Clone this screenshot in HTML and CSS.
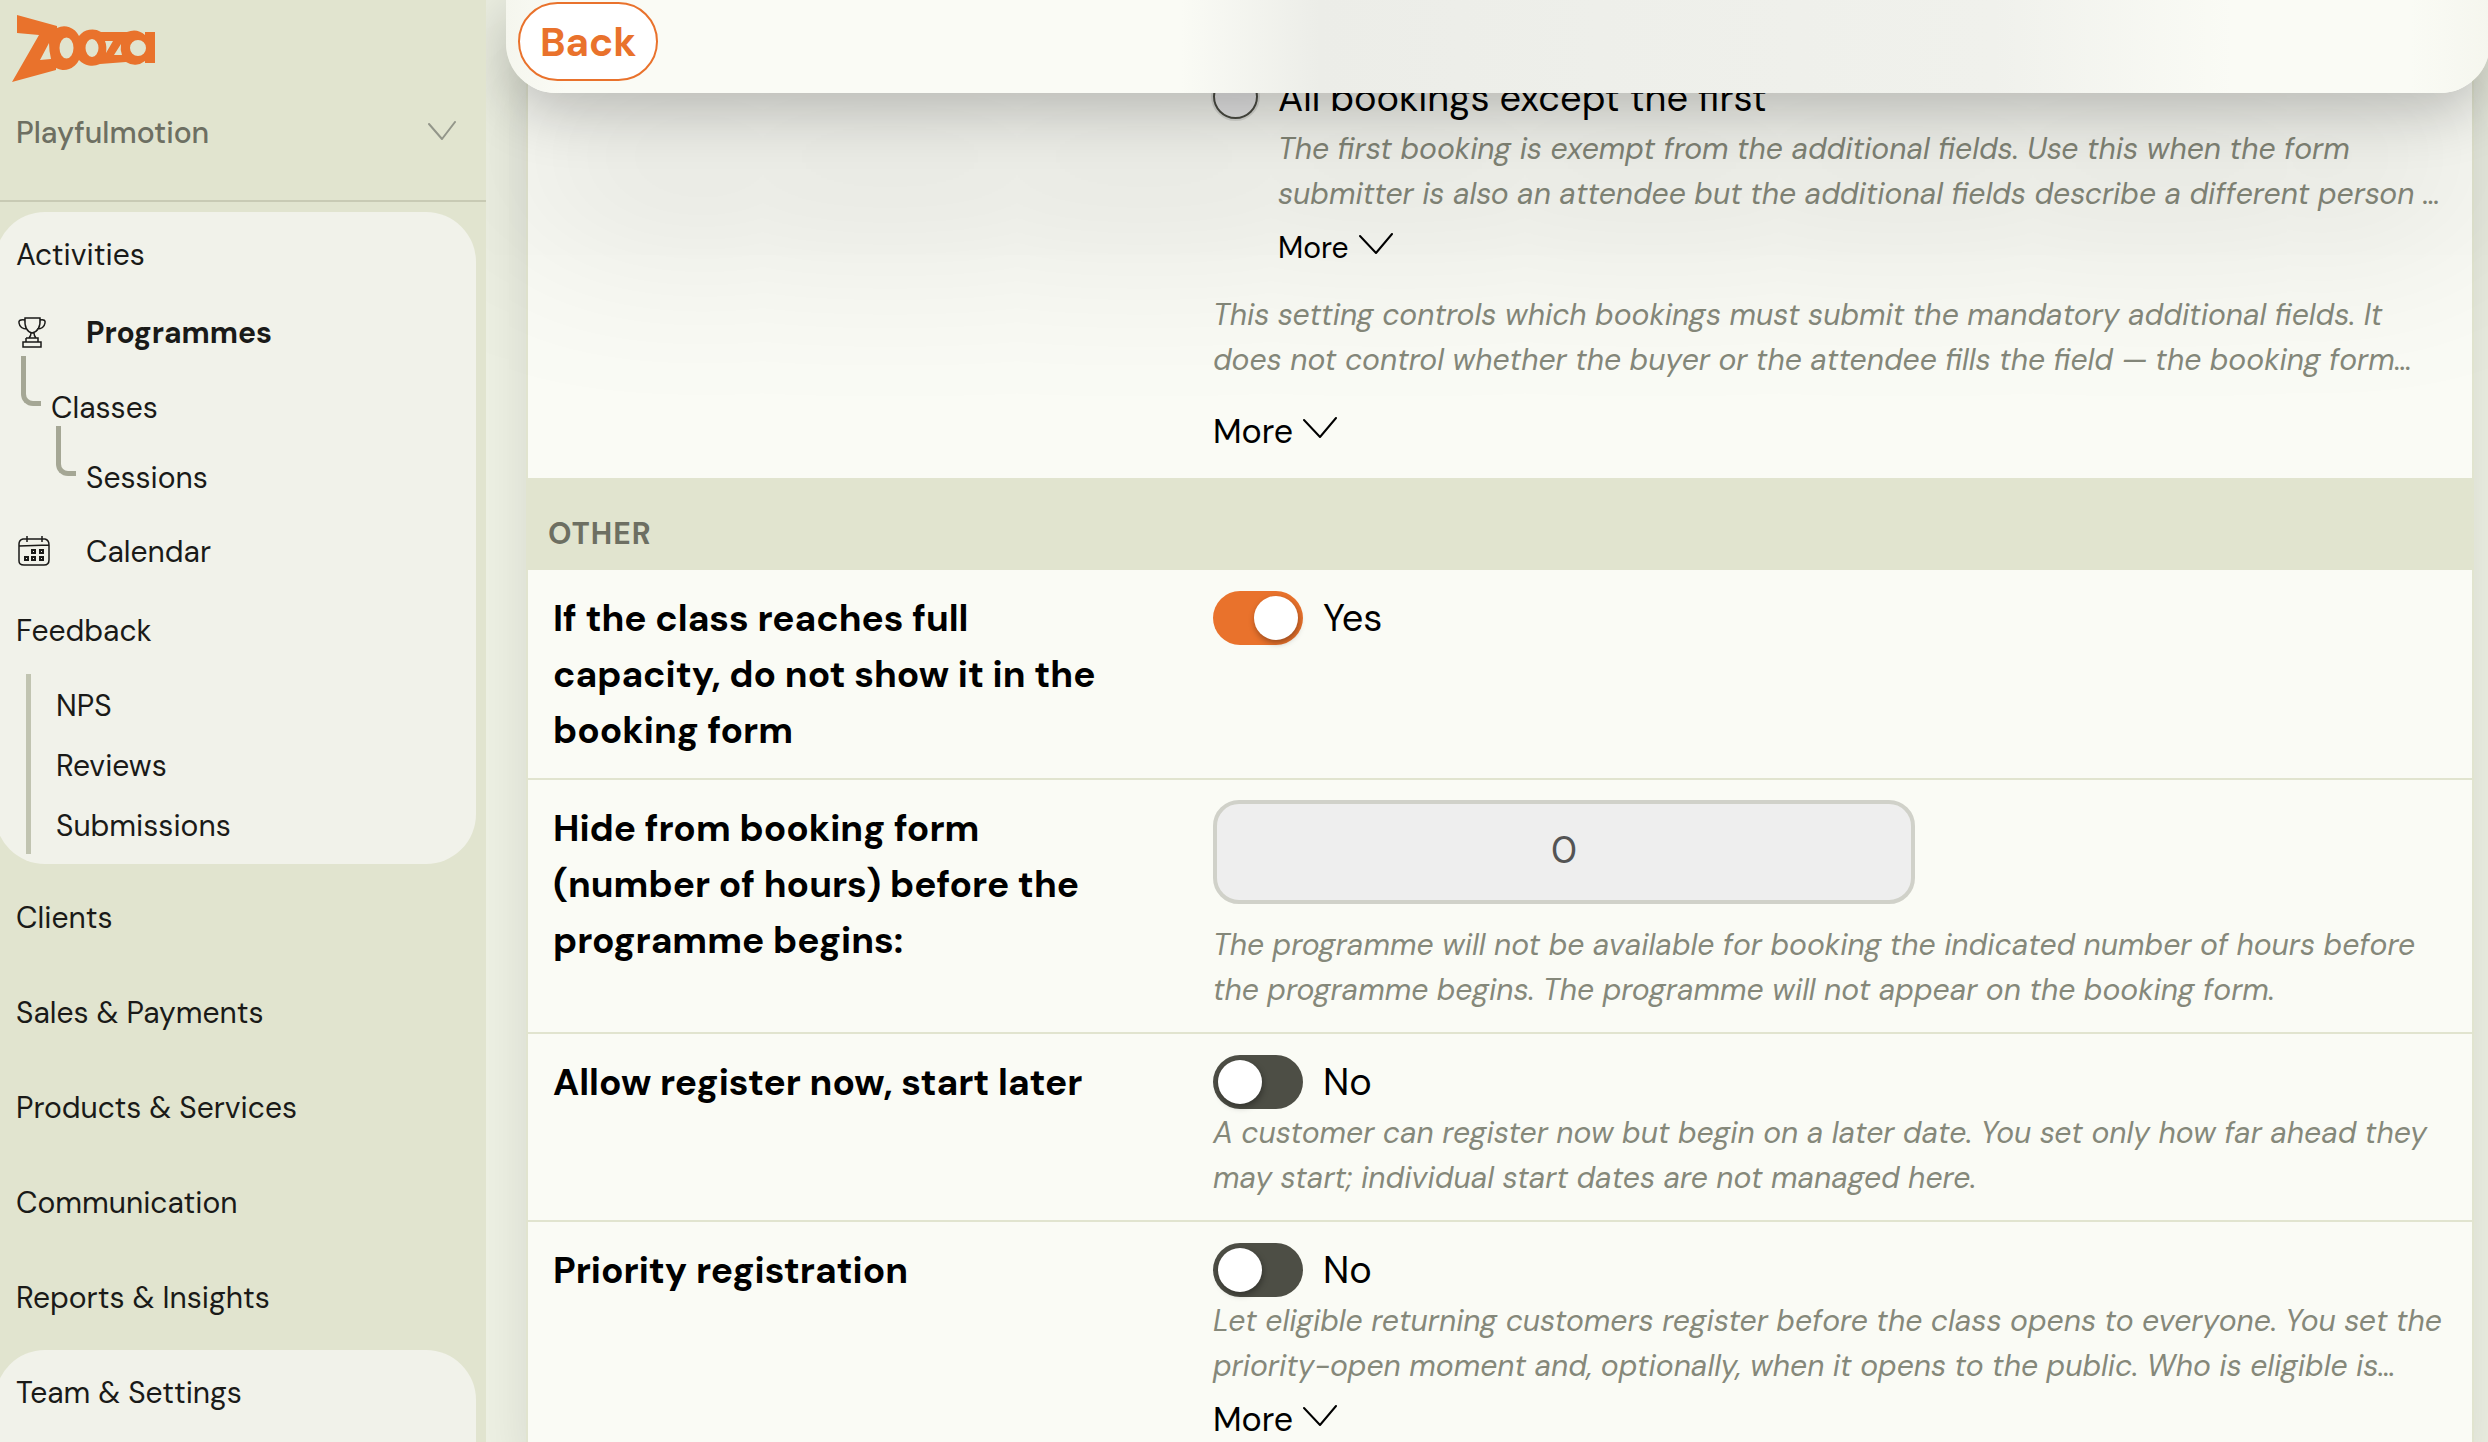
FILE: index.html
```html
<!DOCTYPE html>
<html lang="en">
<head>
    <meta charset="UTF-8">
    <meta name="viewport" content="width=device-width, initial-scale=1.0">
    <title>Zooza - Programme settings</title>
    <link rel="stylesheet" href="styles.css">
</head>
<body>
    <aside class="sidebar">
        <header class="sidebar-head">
            <a class="logo" href="#" aria-label="Zooza">
                <svg width="145" height="68" viewBox="0 0 145 68" aria-hidden="true">
                    <path class="logo-fill" fill-rule="evenodd" d="M5 0 L45 11 L45 13 A17 19 0 0 1 67 21 A17 17 0 0 1 89 17 L115 17 A17 17 0 0 1 133 20 L133 17 L143 17 L143 48 L133 48 L133 46 A16 16 0 0 1 114 47 L88 49 A18 18 0 0 1 67 45 A17 18 0 0 1 44 53 L44 55 L0 67 L27 20 L5 18 Z M37 28 L28 45 L39 44 Q37 36 37 28 Z M47.500 33 a7 10.500 0 1 0 14 0 a7 10.500 0 1 0 -14 0 Z M73.500 33 a6.500 9 0 1 0 13 0 a6.500 9 0 1 0 -13 0 Z M93 26 L101 26 L94 38 Q95 31 93 26 Z M109 29 L102 40 L110 40 Q108 35 109 29 Z M118 33 a8 8 0 1 0 16 0 a8 8 0 1 0 -16 0 Z"/>
                </svg>
            </a>
            <button class="company" type="button">
                <span>Playfulmotion</span>
                <svg class="chevron" width="28" height="20" viewBox="0 0 28 20" aria-hidden="true"><path d="M1 3 L14 18 L27 1"/></svg>
            </button>
        </header>

        <nav class="menu">
            <section class="menu-card">
                <a class="menu-title" href="#">Activities</a>
                <a class="menu-item active" href="#">
                    <svg class="icon" width="34" height="34" viewBox="0 0 34 34" aria-hidden="true">
                        <path d="M9 2 H24 Q25 15 16 17 Q8 15 9 2 Z M9 4 Q2 3 3 7 Q4 13 11 13 M24 4 Q30 3 29 7 Q28 13 21 13 M15 17 Q15 20 13 22 M18 17 Q18 20 20 22 M10 22 H22 V26 M10 22 V26 M7 26 H25 V31 H7 Z"/>
                    </svg>
                    <span>Programmes</span>
                </a>
                <a class="menu-branch" href="#">Classes</a>
                <a class="menu-branch deep" href="#">Sessions</a>
                <a class="menu-item" href="#">
                    <svg class="icon" width="34" height="34" viewBox="0 0 34 34" aria-hidden="true">
                        <path d="M7 4 H29 Q33 5 33 10 V25 Q33 30 28 30 H8 Q3 30 3 26 V9 Q3 5 7 4 Z M3 11 L33 10 M11 1 V7 M26 1 V7"/>
                        <path class="icon-dots" d="M16 15 h3 v3 h-3 Z M24 15 h3 v3 h-3 Z M9 22 h3 v3 h-3 Z M16 22 h3 v3 h-3 Z M24 22 h3 v3 h-3 Z"/>
                    </svg>
                    <span>Calendar</span>
                </a>
                <a class="menu-title" href="#">Feedback</a>
                <div class="submenu">
                    <a href="#">NPS</a>
                    <a href="#">Reviews</a>
                    <a href="#">Submissions</a>
                </div>
            </section>
            <a class="menu-link" href="#">Clients</a>
            <a class="menu-link" href="#">Sales &amp; Payments</a>
            <a class="menu-link" href="#">Products &amp; Services</a>
            <a class="menu-link" href="#">Communication</a>
            <a class="menu-link" href="#">Reports &amp; Insights</a>
            <section class="menu-card last">
                <a class="menu-title" href="#">Team &amp; Settings</a>
            </section>
        </nav>
    </aside>

    <main class="main">
        <div class="topbar">
            <button class="back" type="button">Back</button>
        </div>

        <form class="settings">
            <div class="row first">
                <div class="label"></div>
                <div class="field">
                    <div class="option">
                        <input class="radio" type="radio" name="extra_fields" id="except-first">
                        <div class="option-body">
                            <label for="except-first">All bookings except the first</label>
                            <p class="help">The first booking is exempt from the additional fields. Use this when the form<br>submitter is also an attendee but the additional fields describe a different person …</p>
                            <button class="more small" type="button">More <svg class="chevron" width="34" height="22" viewBox="0 0 34 22" aria-hidden="true"><path d="M1 3 L17 20 L33 1"/></svg></button>
                        </div>
                    </div>
                    <p class="help">This setting controls which bookings must submit the mandatory additional fields. It<br>does not control whether the buyer or the attendee fills the field — the booking form…</p>
                    <button class="more" type="button">More <svg class="chevron" width="34" height="22" viewBox="0 0 34 22" aria-hidden="true"><path d="M1 3 L17 20 L33 1"/></svg></button>
                </div>
            </div>

            <h2 class="section-title">Other</h2>

            <div class="row">
                <label class="label" for="hide-full">If the class reaches full capacity, do not show it in the booking form</label>
                <div class="field">
                    <div class="switch-line">
                        <input class="switch" type="checkbox" id="hide-full" checked>
                        <span>Yes</span>
                    </div>
                </div>
            </div>
            <div class="row">
                <label class="label" for="hide-hours">Hide from booking form (number of hours) before the programme begins:</label>
                <div class="field">
                    <input class="number" type="text" id="hide-hours" value="0" disabled>
                    <p class="help">The programme will not be available for booking the indicated number of hours before<br>the programme begins. The programme will not appear on the booking form.</p>
                </div>
            </div>
            <div class="row">
                <label class="label" for="start-later">Allow register now, start later</label>
                <div class="field">
                    <div class="switch-line">
                        <input class="switch" type="checkbox" id="start-later">
                        <span>No</span>
                    </div>
                    <p class="help">A customer can register now but begin on a later date. You set only how far ahead they<br>may start; individual start dates are not managed here.</p>
                </div>
            </div>
            <div class="row">
                <label class="label" for="priority">Priority registration</label>
                <div class="field">
                    <div class="switch-line">
                        <input class="switch" type="checkbox" id="priority">
                        <span>No</span>
                    </div>
                    <p class="help">Let eligible returning customers register before the class opens to everyone. You set the<br>priority-open moment and, optionally, when it opens to the public. Who is eligible is…</p>
                    <button class="more" type="button">More <svg class="chevron" width="34" height="22" viewBox="0 0 34 22" aria-hidden="true"><path d="M1 3 L17 20 L33 1"/></svg></button>
                </div>
            </div>
        </form>
    </main>
</body>
</html>
```
FILE: styles.css
```css
*, *::before {
    box-sizing: border-box;
}
body {
    display: flex;
    height: 100vh;
    margin: 0;
    overflow: hidden;
    background-color: #edf0e3;
    color: #000;
    font-family: "DM Sans", Inter, sans-serif;
    font-size: 38px;
    line-height: 56px;
}
button, input {
    font-family: inherit;
}
a {
    color: inherit;
    text-decoration: none;
}

/* Sidebar */
.sidebar {
    flex: 0 0 486px;
    overflow: hidden;
    background-color: #e1e4cf;
    color: #1a1a18;
    font-size: 30px;
    line-height: 44px;
}
.sidebar-head {
    height: 202px;
    padding: 15px 30px 0 12px;
    border-bottom: 2px solid #c8cab4;
}
.logo {
    display: block;
    height: 68px;
}
.logo-fill {
    fill: #e9722c;
}
.company {
    display: flex;
    justify-content: space-between;
    align-items: center;
    width: 100%;
    margin-top: 28px;
    padding: 0 0 0 4px;
    border: 0;
    background: none;
    color: #6d6f62;
    font-size: 30px;
    font-weight: 500;
    line-height: 44px;
}
.chevron {
    fill: none;
    stroke: currentColor;
    stroke-width: 2;
    stroke-linecap: round;
    stroke-linejoin: round;
}
.company .chevron {
    margin-bottom: 4px;
    stroke: #93968a;
}
.menu {
    padding-top: 10px;
}
.menu-card {
    margin: 0 10px 11px -5px;
    padding: 21px 20px 10px 21px;
    border-radius: 50px;
    background-color: #f1f2ea;
}
.menu-card.last {
    height: 200px;
}
.menu-title {
    display: block;
    margin-bottom: 21px;
}
.menu-item {
    display: flex;
    align-items: center;
    gap: 36px;
    margin-bottom: 31px;
}
.menu-item.active {
    margin-top: 34px;
    font-weight: 700;
}
.menu-item + .menu-title {
    margin-top: 35px;
}
.icon {
    flex: none;
    fill: none;
    stroke: #1a1a18;
    stroke-width: 1.5;
}
.icon-dots {
    stroke-width: 2;
}
.menu-branch {
    display: block;
    position: relative;
    margin: 0 0 26px 35px;
}
.menu-branch::before {
    content: "";
    position: absolute;
    left: -30px;
    top: -30px;
    width: 20px;
    height: 50px;
    border-left: 5px solid #a5a795;
    border-bottom: 5px solid #a5a795;
    border-bottom-left-radius: 12px;
}
.menu-branch.deep {
    margin-left: 70px;
    margin-bottom: 30px;
}
.submenu {
    display: grid;
    gap: 16px;
    margin-left: 10px;
    padding: 10px 0 6px 25px;
    border-left: 5px solid #c1c4b1;
}
.menu-link {
    display: block;
    margin-bottom: 16px;
    padding: 21px 16px 14px;
}

/* Content */
.main {
    flex: 1;
    min-width: 0;
    overflow: hidden;
}
.topbar {
    position: relative;
    z-index: 1;
    height: 93px;
    margin: 0 -2px -23px 20px;
    padding: 2px 12px;
    border-radius: 0 0 50px 50px;
    background: linear-gradient(90deg, #f5f6ee, #fafbf5 3%, #fafbf5 34%, #ecede8 41%, #eeefea 55%, #f0f1ec 75%, #fafbf5 87%, #fafbf5 96%, #f5f6ee);
    box-shadow: 0 16px 60px rgba(0, 0, 0, 0.24), 0 110px 200px rgba(0, 0, 0, 0.18);
}
.back {
    height: 79px;
    padding: 0 20px;
    border: 2px solid #e9722c;
    border-radius: 40px;
    background-color: #fff;
    color: #e9722c;
    font-size: 40px;
    font-weight: 700;
}
.settings {
    margin: 0 14px 0 40px;
    border: solid #e1e4cf;
    border-width: 0 2px;
    background-color: #fafbf5;
    box-shadow: 0 0 50px rgba(0, 0, 0, 0.1);
}
.row {
    display: grid;
    grid-template-columns: 34% 1fr;
    padding: 20px 0;
    border-bottom: 2px solid #e1e4cf;
}
.row.first {
    padding: 0 0 18px;
    border-bottom: 0;
}
.label {
    padding: 0 80px 0 25px;
    font-size: 37px;
    font-weight: 700;
}
.field {
    padding-left: 24px;
}
.section-title {
    height: 92px;
    margin: 0;
    padding: 28px 20px 0;
    background-color: #e1e4cf;
    color: #6d6f62;
    font-size: 30px;
    font-weight: 700;
    letter-spacing: 1px;
    line-height: 56px;
    text-transform: uppercase;
}
.help {
    margin: 0;
    color: #85887a;
    font-size: 30px;
    font-style: italic;
    line-height: 45px;
    white-space: nowrap;
}
.option {
    display: flex;
    gap: 20px;
    margin-bottom: 22px;
}
.radio {
    flex: none;
    width: 45px;
    height: 45px;
    margin: 4px 0 0;
    appearance: none;
    border: 2px solid #4d4e45;
    border-radius: 50%;
    background-color: #eee;
    box-shadow: 0 0 0 2px rgba(0, 0, 0, 0.1);
}
.option-body label {
    display: block;
}
.more {
    display: flex;
    align-items: center;
    gap: 10px;
    margin-top: 22px;
    padding: 0;
    border: 0;
    background: none;
    color: #000;
    font-size: 34px;
    line-height: 56px;
}
.more .chevron {
    margin-bottom: 8px;
}
.more.small {
    margin-top: 9px;
    font-size: 30px;
    line-height: 45px;
}
.switch-line + .help + .more {
    margin-top: 4px;
}
.switch-line {
    display: flex;
    align-items: center;
    gap: 20px;
}
.switch {
    width: 90px;
    height: 54px;
    margin: 0;
    padding: 5px;
    appearance: none;
    border-radius: 27px;
    background-color: #4d4e45;
}
.switch::before {
    content: "";
    display: block;
    width: 44px;
    height: 44px;
    border-radius: 50%;
    background-color: #fff;
    box-shadow: 1px 3px 6px rgba(0, 0, 0, 0.35);
}
.switch:checked {
    background-color: #e9722c;
}
.switch:checked::before {
    margin-left: auto;
}
.number {
    display: block;
    width: 100%;
    max-width: 702px;
    height: 104px;
    margin-bottom: 18px;
    padding: 0 0 4px;
    border: 4px solid #d0d1c9;
    border-radius: 26px;
    background-color: #eee;
    color: #545454;
    font-size: 38px;
    text-align: center;
}
```
